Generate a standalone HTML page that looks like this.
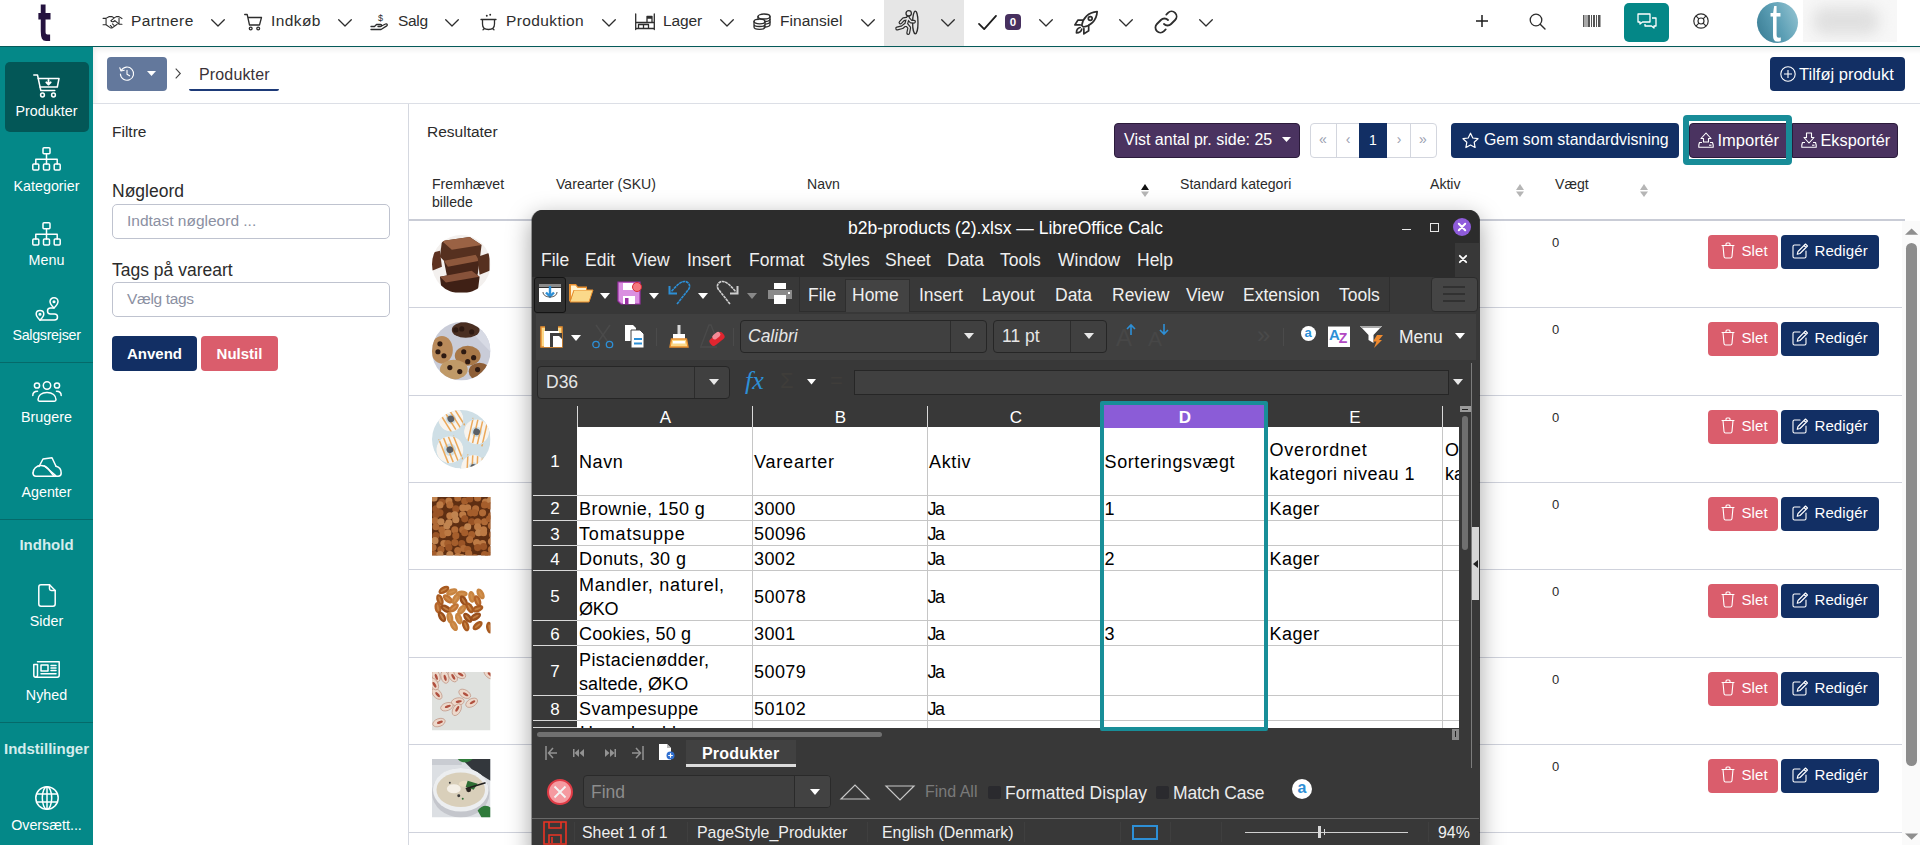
<!DOCTYPE html>
<html lang="da">
<head>
<meta charset="utf-8">
<title>Produkter</title>
<style>
*{box-sizing:border-box;margin:0;padding:0}
html,body{width:1920px;height:845px;overflow:hidden;background:#fff}
body{font-family:"Liberation Sans","DejaVu Sans",sans-serif;color:#2b2b2b;position:relative}
.a{position:absolute;white-space:nowrap}
svg{display:block;overflow:visible;position:absolute}
/* top nav */
#top{position:absolute;left:0;top:0;width:1920px;height:47px;background:#fff;border-bottom:1px solid #055a5a}
#top .t{position:absolute;top:11.4px;letter-spacing:.4px;font-size:15.5px;line-height:20px;color:#2d2d2d;white-space:nowrap}
.chev{position:absolute;top:18.8px;width:14px;height:8px}
/* sidebar */
#side{position:absolute;left:0;top:47px;width:93px;height:798px;background:#048888}
#side .lbl{position:absolute;left:0;width:93px;text-align:center;color:#fff;font-size:14.3px;line-height:18px;white-space:nowrap}
#side .sec{position:absolute;left:0;width:93px;text-align:center;color:#d4ecec;font-size:15px;font-weight:bold;line-height:18px;white-space:nowrap}
#side .hr{position:absolute;left:0;width:93px;height:1px;background:#056a6a}
.w{fill:none;stroke:#fff;stroke-width:1.5;stroke-linecap:round;stroke-linejoin:round}
.k{fill:none;stroke:#2d2d2d;stroke-width:1.3;stroke-linecap:round;stroke-linejoin:round}
/* main */
#main{position:absolute;left:93px;top:47px;width:1827px;height:798px;background:#fff}
#main .a{color:#2b2b2b}
.btn{position:absolute;border-radius:4px;color:#fff;white-space:nowrap}
.navy{background:#122f64}
.purple{background:#4a3360;border:1px solid #2b1b3b}
.red{background:#da5d6c}
.inp{position:absolute;border:1px solid #bfc3cf;border-radius:5px;background:#fff;color:#8b90a2;font-size:15.5px;line-height:32px;padding-left:14px;white-space:nowrap}
.th{position:absolute;font-size:14.1px;line-height:18px;color:#2b2b2b;white-space:nowrap}
.rowline{position:absolute;left:316px;width:1493px;height:1px;background:#cfd2dc}
.zero{position:absolute;left:1459px;font-size:13px;line-height:16px;color:#2b2b2b}
.slet{left:1615px;width:70px;height:34px}
.red span,.edit span{position:absolute;top:7px;font-size:15px;line-height:18px;letter-spacing:.1px}
.edit{left:1688px;width:98px;height:34px}
.sort{position:absolute;width:8px;height:13px}
/* libreoffice window */
#lo{position:absolute;left:532px;top:210px;width:947px;height:650px;background:#383838;border-radius:11px 11px 0 0;box-shadow:0 8px 24px 1px rgba(0,0,0,.36),1px 0 0 0 rgba(22,22,22,.8),-1px 0 0 0 rgba(22,22,22,.35);overflow:hidden;font-family:"Liberation Sans","DejaVu Sans",sans-serif}
#lo .a{color:#efefef}
#lo .m{position:absolute;top:39px;font-size:17.5px;line-height:22px;color:#efefef;white-space:nowrap}
#lo .tb{position:absolute;top:74px;font-size:17.5px;line-height:22px;color:#efefef;white-space:nowrap}
.car{position:absolute;width:10px;height:6px}
.box{position:absolute;background:#404040;border:1px solid #262626;border-radius:4px}
.ch{position:absolute;top:195px;height:22px;color:#fff;font-size:17px;line-height:25.5px;text-align:center;padding-left:2px;overflow:hidden}
.rh{position:absolute;left:1px;width:44px;color:#fff;font-size:17px;text-align:center}
.cell{position:absolute;color:#000;font-size:18px;line-height:24px;white-space:nowrap}
#lo .cell{color:#000}
.gl{position:absolute;background:#c6c6c6}
.st{position:absolute;top:613px;font-size:15.9px;line-height:20px;color:#efefef;white-space:nowrap}
</style>
</head>
<body>
<div id="top">
  <div class="a" style="left:38px;top:-3.500px;font-size:51px;line-height:54px;font-weight:bold;color:#24123f;font-family:'DejaVu Sans','Liberation Sans',sans-serif;transform:scaleX(.54);transform-origin:left top">t</div>
  <!-- Partnere -->
  <svg style="left:102.500px;top:16px" width="19" height="12.300" viewBox="0 0 20 13"><path class="k" style="stroke-width:1.150" d="M0 2.500h3l3.200-1.800h3.400l2.300 1.300 2.100-1.300h2.800l3.200 2H20M0 9.200h3.200l4.300 3.100c.9.600 1.800.600 2.600 0l4.800-3.600M12 2 8.300 4.900c.8 1.300 2.200 1.500 3.400.600l.9-.700 4.300 3.700M16.900 8.700H20M3.200 2.500v6.700M16.900 2.500v6.200M9.200 11.500 7.700 10M11.500 9.800 10 8.300"/></svg>
  <div class="t" style="left:131px">Partnere</div>
  <svg class="chev" style="left:211px" viewBox="0 0 14 8"><path class="k" d="M.7.7 7 7 13.300.7"/></svg>
  <!-- Indkøb -->
  <svg style="left:244px;top:13px" width="19" height="18" viewBox="0 0 19 18"><path class="k" d="M.7 1.500h2.500l2.300 10.500h10l2-7.500H4.200"/><circle class="k" cx="6.700" cy="15.500" r="1.400"/><circle class="k" cx="14.200" cy="15.500" r="1.400"/></svg>
  <div class="t" style="left:271px">Indkøb</div>
  <svg class="chev" style="left:338px" viewBox="0 0 14 8"><path class="k" d="M.7.7 7 7 13.300.7"/></svg>
  <!-- Salg -->
  <svg style="left:371px;top:12px" width="19" height="19" viewBox="0 0 19 19"><path class="k" d="M0 14.500h3.500l2-2h4c1.500 0 1.500 2 0 2h-2.500M9.500 14.500l5-2.500c1.500-.7 2.500 1 1.200 1.900L10 17.500H0"/><text x="7" y="9" font-size="9" font-family="Liberation Sans,sans-serif" fill="#2d2d2d">$</text></svg>
  <div class="t" style="left:398px;letter-spacing:-.3px">Salg</div>
  <svg class="chev" style="left:445px" viewBox="0 0 14 8"><path class="k" d="M.7.7 7 7 13.300.7"/></svg>
  <!-- Produktion -->
  <svg style="left:480px;top:13px" width="17" height="18" viewBox="0 0 17 18"><path class="k" d="M1 6.500h15M2.500 6.500v4.500c0 3.500 2.500 5.500 6 5.500s6-2 6-5.500V6.500M4.200 15.300 3 16.800M12.800 15.300 14 16.800"/><circle cx="6.800" cy="2.800" r=".95" fill="#2d2d2d"/><circle cx="10.200" cy="1.800" r=".95" fill="#2d2d2d"/></svg>
  <div class="t" style="left:506px">Produktion</div>
  <svg class="chev" style="left:602px" viewBox="0 0 14 8"><path class="k" d="M.7.7 7 7 13.300.7"/></svg>
  <!-- Lager -->
  <svg style="left:635px;top:14px" width="20" height="16" viewBox="0 0 20 16"><path class="k" d="M.7 0v15.500M19.300 0v15.500M.7 8.500h18.600M.7 14.500h18.600M3.500 14.500v-4h5v4M8.500 14.500v-4h5v4M12 8.500v-6h5v6M12 4h5"/></svg>
  <div class="t" style="left:663px;letter-spacing:-.1px">Lager</div>
  <svg class="chev" style="left:720px" viewBox="0 0 14 8"><path class="k" d="M.7.7 7 7 13.300.7"/></svg>
  <!-- Finansiel -->
  <svg style="left:753px;top:13px" width="19" height="17" viewBox="0 0 19 17"><ellipse class="k" cx="11" cy="3.500" rx="6" ry="2.500"/><path class="k" d="M5 3.500v3M17 3.500v8c0 1.400-2.700 2.500-6 2.500"/><ellipse class="k" cx="6.500" cy="8.500" rx="5.500" ry="2.300"/><path class="k" d="M1 8.500v5.500c0 1.300 2.500 2.300 5.500 2.300s5.500-1 5.500-2.300V8.500M1 11.200c0 1.300 2.500 2.300 5.500 2.300s5.500-1 5.500-2.300M17 6.200c0 1-1.800 2-4.500 2.300M17 8.800c0 1-1.800 2-4.500 2.300"/></svg>
  <div class="t" style="left:780px;letter-spacing:.05px">Finansiel</div>
  <svg class="chev" style="left:861px" viewBox="0 0 14 8"><path class="k" d="M.7.7 7 7 13.300.7"/></svg>
  <!-- active runner -->
  <div class="a" style="left:884px;top:0;width:80px;height:46px;background:#e6e6e6"></div>
  <svg style="left:895px;top:9px" width="26" height="27" viewBox="0 0 26 27"><ellipse cx="20.300" cy="13.500" rx="2.700" ry="11.300" fill="none" stroke="#2d2d2d" stroke-width="1.300"/><path d="M13 8.500 11.200 15M11.200 15l3 3.800-1 5.200M11.200 15 7.200 18.200l-5 1.300M13 9.500 8.500 10.200 5.500 13.500M13.200 9.500l2.800 3 3 .2" fill="none" stroke="#2d2d2d" stroke-width="3.900" stroke-linecap="round" stroke-linejoin="round"/><path d="M13 8.500 11.200 15M11.200 15l3 3.800-1 5.200M11.200 15 7.200 18.200l-5 1.300M13 9.500 8.500 10.200 5.500 13.500M13.200 9.500l2.800 3 3 .2" fill="none" stroke="#e6e6e6" stroke-width="1.500" stroke-linecap="round" stroke-linejoin="round"/><circle cx="13.700" cy="4.300" r="2.700" fill="#e6e6e6" stroke="#2d2d2d" stroke-width="1.300"/></svg>
  <svg class="chev" style="left:941px" viewBox="0 0 14 8"><path class="k" d="M.7.7 7 7 13.300.7"/></svg>
  <!-- check -->
  <svg style="left:977.300px;top:13.500px" width="21" height="17" viewBox="0 0 21 18"><path d="M1.500 10.500 7 16 19.500 2" fill="none" stroke="#1d1d1d" stroke-width="1.900" stroke-linecap="round" stroke-linejoin="round"/></svg>
  <div class="a" style="left:1005px;top:14px;width:16px;height:16px;border-radius:4px;background:#47305f;color:#fff;font-size:11.5px;font-weight:bold;line-height:16px;text-align:center">0</div>
  <svg class="chev" style="left:1039px" viewBox="0 0 14 8"><path class="k" d="M.7.7 7 7 13.300.7"/></svg>
  <!-- rocket -->
  <svg style="left:1073px;top:9.500px" width="26" height="25.500" viewBox="0 0 24 24"><g class="k" style="stroke-width:1.600"><path d="M8 14.500C9 8 14 2 22.500 1.500 22 10 16 15 9.500 16z"/><circle cx="16" cy="8" r="1.800"/><path d="M9.500 9.500H4.500L1.500 14h5M14.500 14.500v5L10 22.500v-5M6.500 16.500c-2.500.5-3.500 3-3.500 5 2 0 4.500-1 5-3.500"/></g></svg>
  <svg class="chev" style="left:1119px" viewBox="0 0 14 8"><path class="k" d="M.7.7 7 7 13.300.7"/></svg>
  <!-- link -->
  <svg style="left:1154px;top:10px" width="24" height="24" viewBox="0 0 24 24"><g class="k" style="stroke-width:1.800"><path d="M10 14a5 5 0 0 0 7.100 0l4-4A5 5 0 0 0 14 2.900l-1.700 1.700"/><path d="M14 10a5 5 0 0 0-7.100 0l-4 4A5 5 0 0 0 10 21.100l1.700-1.700"/></g></svg>
  <svg class="chev" style="left:1199px" viewBox="0 0 14 8"><path class="k" d="M.7.7 7 7 13.300.7"/></svg>
  <!-- right side -->
  <svg style="left:1476px;top:15px" width="12" height="12" viewBox="0 0 12 12"><path d="M6 0v12M0 6h12" stroke="#1d1d1d" stroke-width="1.500" fill="none"/></svg>
  <svg style="left:1529px;top:13px" width="17" height="17" viewBox="0 0 17 17"><circle cx="7" cy="7" r="5.800" fill="none" stroke="#2d2d2d" stroke-width="1.300"/><path d="M11.200 11.200 16 16" stroke="#2d2d2d" stroke-width="1.400" stroke-linecap="round"/></svg>
  <svg style="left:1583px;top:15px" width="18" height="12" viewBox="0 0 18 12"><g fill="#555"><rect x="0" width="1.500" height="12"/><rect x="2.500" width="1" height="12"/><rect x="4.500" width="2.500" height="12"/><rect x="8" width="1" height="12"/><rect x="10" width="2" height="12"/><rect x="13" width="1" height="12"/><rect x="15" width="2.500" height="12"/></g></svg>
  <div class="a" style="left:1624px;top:3px;width:45px;height:39px;border-radius:5px;background:#048787"></div>
  <svg style="left:1637px;top:13px" width="20" height="18" viewBox="0 0 20 18"><g fill="none" stroke="#fff" stroke-width="1.300" stroke-linejoin="round"><path d="M1 1h12v8H5.500L3 11V9H1z"/><path d="M15 5h4v8h-2v2l-2.500-2H8v-2"/></g></svg>
  <svg style="left:1693px;top:13px" width="16" height="16" viewBox="0 0 16 16"><g fill="none" stroke="#2d2d2d" stroke-width="1.200"><circle cx="8" cy="8" r="7.200"/><circle cx="8" cy="8" r="3"/><path d="M2.900 2.900 5.900 5.900M13.100 2.900 10.100 5.900M2.900 13.100 5.900 10.100M13.100 13.100 10.100 10.100"/></g></svg>
  <div class="a" style="left:1757px;top:2px;width:41px;height:41px;border-radius:50%;background:linear-gradient(65deg,#3a7d95 5%,#5c9fb5 50%,#93c3d1 95%);overflow:hidden"><span style="position:absolute;left:12.500px;top:-5.500px;font-size:53px;line-height:52px;color:#fff;font-family:'Liberation Sans',sans-serif;transform:scaleX(.75);transform-origin:left top">t</span></div>
  <div class="a" style="left:1803px;top:0;width:94px;height:42px;background:#f7f7f7;overflow:hidden"><div class="a" style="left:10px;top:7px;width:66px;height:28px;border-radius:12px;background:#e0e0e0;filter:blur(7px)"></div></div>
</div>
<div id="side">
  <!-- coordinates inside #side are page y minus 47 -->
  <div class="a" style="left:5px;top:15px;width:84px;height:70px;border-radius:5px;background:#035757"></div>
  <!-- Produkter icon: page x33-59,y74-97 -->
  <svg style="left:33px;top:27px" width="27" height="24" viewBox="0 0 27 24"><g class="w"><path d="M.8 1h3.700l3.300 15.500h14"/><path d="M5.200 4.500H26l-1.700 8.500H7"/><circle cx="9.500" cy="21" r="1.900"/><circle cx="20.500" cy="21" r="1.900"/><path d="M15.500 5.800v4.500M13.300 8.300l2.200 2.200 2.200-2.200" style="stroke-width:1.800"/></g></svg>
  <div class="lbl" style="top:55px">Produkter</div>
  <!-- Kategorier: icon page y147.5-170.4 -->
  <svg style="left:32px;top:100px" width="29" height="24" viewBox="0 0 29 24"><g class="w"><rect x="11" y=".8" width="7" height="6" rx="1"/><rect x=".8" y="17" width="6" height="6" rx="1"/><rect x="11.500" y="17" width="6" height="6" rx="1"/><rect x="22.200" y="17" width="6" height="6" rx="1"/><path d="M14.500 6.800V17M3.800 17v-4.700h21.400V17"/></g></svg>
  <div class="lbl" style="top:130px">Kategorier</div>
  <!-- Menu: icon page y222.5-245.4 -->
  <svg style="left:32px;top:175px" width="29" height="24" viewBox="0 0 29 24"><g class="w"><rect x="11" y=".8" width="7" height="6" rx="1"/><rect x=".8" y="17" width="6" height="6" rx="1"/><rect x="11.500" y="17" width="6" height="6" rx="1"/><rect x="22.200" y="17" width="6" height="6" rx="1"/><path d="M14.500 6.800V17M3.800 17v-4.700h21.400V17"/></g></svg>
  <div class="lbl" style="top:204px">Menu</div>
  <!-- Salgsrejser: icon page x35-58.5,y297-321 -->
  <svg style="left:35px;top:250px" width="24" height="24" viewBox="0 0 24 24"><g class="w"><path d="M19 .8c2.300 0 4 1.700 4 3.800 0 2.700-4 6.400-4 6.400s-4-3.700-4-6.400c0-2.100 1.700-3.800 4-3.800z"/><circle cx="19" cy="4.700" r=".8"/><path d="M5 13.500c2.200 0 3.800 1.600 3.800 3.600 0 2.500-3.800 6-3.800 6s-3.800-3.500-3.800-6c0-2 1.600-3.600 3.800-3.600z"/><circle cx="5" cy="17.200" r=".8"/><path d="M5 23.100h14.500a3 3 0 0 0 0-6h-4a3 3 0 0 1 0-6H19"/></g></svg>
  <div class="lbl" style="top:279px;letter-spacing:-.3px">Salgsrejser</div>
  <div class="hr" style="top:315px"></div>
  <!-- Brugere: icon page x32-61,y381-401.5 -->
  <svg style="left:32px;top:334px" width="30" height="21" viewBox="0 0 30 21"><g class="w"><circle cx="15" cy="4.500" r="3.700"/><circle cx="5" cy="4.500" r="2.600"/><circle cx="25" cy="4.500" r="2.600"/><path d="M7.500 20.200h15c1.200 0 1.500-.8 1.500-1.700 0-4-3.500-7-9-7s-9 3-9 7c0 .9.300 1.700 1.500 1.700z"/><path d="M.8 14.500c0-2.500 1.700-4.300 4.700-4.300M29.200 14.500c0-2.500-1.700-4.300-4.700-4.300"/></g></svg>
  <div class="lbl" style="top:361px">Brugere</div>
  <!-- Agenter: icon page y457-477 -->
  <svg style="left:32px;top:410px" width="30" height="20" viewBox="0 0 30 20"><g class="w"><path d="M7 9.500 11 2l9-1.200 4 8.500"/><path d="M1 16c0-4 3.500-7.500 8-7.500 3 0 5 1 7 3l6 7.700"/><path d="M12.500 9l12 10.200M24 9.300c3 .7 5.200 3.500 5.200 6.700 0 2-1.200 3.200-3 3.200H4c-1.800 0-3-1.200-3-3.200"/></g></svg>
  <div class="lbl" style="top:436px">Agenter</div>
  <div class="hr" style="top:472px"></div>
  <div class="sec" style="top:489px">Indhold</div>
  <!-- Sider: icon page x38-56,y584-606.5 -->
  <svg style="left:38px;top:537px" width="18" height="23" viewBox="0 0 18 23"><g class="w"><path d="M3 .8h8.500l5.700 5.700V20c0 1.300-.9 2.200-2.200 2.200H3C1.700 22.200.8 21.300.8 20V3C.8 1.700 1.700.8 3 .8z"/><path d="M11.500.8v4c0 1 .7 1.700 1.700 1.700h4"/></g></svg>
  <div class="lbl" style="top:565px">Sider</div>
  <!-- Nyhed: icon page x33-60,y661-677.5 -->
  <svg style="left:33px;top:614px" width="27" height="17" viewBox="0 0 27 17"><g class="w"><path d="M4.500.8h21.700v13.500c0 1.100-.8 1.900-1.900 1.900H2.700"/><path d="M4.500 3.500H.8v10.800c0 1.100.8 1.900 1.900 1.900s1.800-.8 1.800-1.900z"/><rect x="8" y="4" width="7" height="6"/><path d="M18 4.500h5M18 7h5M18 9.500h5M8 12.800h15"/></g></svg>
  <div class="lbl" style="top:639px">Nyhed</div>
  <div class="hr" style="top:675px"></div>
  <div class="sec" style="top:693px">Indstillinger</div>
  <!-- globe: page x35-58.6,y786.6-810 -->
  <svg style="left:35px;top:739px" width="24" height="24" viewBox="0 0 24 24"><g class="w"><circle cx="12" cy="12" r="11.200"/><ellipse cx="12" cy="12" rx="4.700" ry="11.200"/><path d="M12 .8v22.400M1.500 8h21M1.500 16h21"/></g></svg>
  <div class="lbl" style="top:769px">Oversætt...</div>
</div>
<div id="main">
<div class="a" style="left:0;top:0;width:1827px;height:56px;box-shadow:inset 4px 5px 6px -3px rgba(0,0,0,.09)"></div>
<div class="a" style="left:0;top:56px;width:1827px;height:1px;background:#dcdfe6"></div>
<div class="a" style="left:14px;top:10px;width:60px;height:34px;border-radius:4px;background:#63789c"></div>
<svg style="left:26px;top:18.600px" width="16" height="16" viewBox="0 0 16 16"><g fill="none" stroke="#fff" stroke-width="1.1" stroke-linecap="round" stroke-linejoin="round"><path d="M2.200 4.500A6.600 6.600 0 1 1 1.400 8"/><path d="M.8 1.800 2 5l3.200-.8"/><path d="M8 4.200V8.300l2.600 1.500"/></g></svg>
<svg style="left:54px;top:24px" width="9" height="5" viewBox="0 0 9 5"><path d="M0 0h9L4.500 5z" fill="#fff"/></svg>
<svg style="left:82px;top:21px" width="6" height="11" viewBox="0 0 6 11"><path d="M.7.700 5.300 5.500.7 10.300" fill="none" stroke="#444" stroke-width="1.100"/></svg>
<div class="a" style="left:106px;top:17.500px;font-size:16px;line-height:20px;letter-spacing:.15px;color:#3a3238">Produkter</div>
<div class="a" style="left:96px;top:42px;width:90px;height:1.600px;border-radius:0 0 2px 2px;background:#1d3a78"></div>
<div class="btn navy" style="left:1677px;top:10px;width:135px;height:34px"><svg style="left:10px;top:9px" width="16" height="16" viewBox="0 0 16 16"><g fill="none" stroke="#fff" stroke-width="1.100"><circle cx="8" cy="8" r="7.200"/><path d="M8 4v8M4 8h8"/></g></svg><span class="a" style="left:29px;top:7px;font-size:16.500px;line-height:20px;color:#fff">Tilføj produkt</span></div>
<div class="a" style="left:315px;top:57px;width:1px;height:742px;background:#d5d8e0"></div>
<div class="a" style="left:19px;top:75px;font-size:15.500px;line-height:20px">Filtre</div>
<div class="a" style="left:19px;top:132.800px;font-size:17.500px;line-height:22px">Nøgleord</div>
<div class="inp" style="left:19px;top:157px;width:278px;height:35px">Indtast nøgleord ...</div>
<div class="a" style="left:19px;top:211.700px;font-size:17.500px;line-height:22px">Tags på vareart</div>
<div class="inp" style="left:19px;top:235px;width:278px;height:35px;letter-spacing:-.35px">Vælg tags</div>
<div class="btn navy" style="left:19px;top:289px;width:85px;height:35px;font-weight:bold;font-size:15px;line-height:35px;text-align:center">Anvend</div>
<div class="btn red" style="left:108px;top:289px;width:77px;height:35px;font-weight:bold;font-size:15px;line-height:35px;text-align:center">Nulstil</div>
<div class="a" style="left:334px;top:75px;font-size:15.500px;line-height:20px">Resultater</div>
<div class="btn purple" style="left:1021px;top:76px;width:186px;height:35px"><span class="a" style="left:9px;top:6px;font-size:16px;line-height:20px;color:#fff">Vist antal pr. side: 25</span><svg style="left:167px;top:13px" width="9" height="5" viewBox="0 0 9 5"><path d="M0 0h9L4.500 5z" fill="#fff"/></svg></div>
<div class="a" style="left:1217px;top:76px;width:127px;height:35px;border:1px solid #d3d6de;border-radius:4px;background:#fff"></div>
<div class="a" style="left:1243px;top:76px;width:1px;height:35px;background:#d3d6de"></div>
<div class="a" style="left:1317px;top:76px;width:1px;height:35px;background:#d3d6de"></div>
<div class="a" style="left:1266px;top:76px;width:28px;height:35px;background:#122f64;color:#fff;font-size:14px;line-height:35px;text-align:center">1</div>
<div class="a" style="left:1222px;top:76px;width:16px;height:35px;color:#9aa0b0;font-size:14px;line-height:33px;text-align:center">«</div>
<div class="a" style="left:1247px;top:76px;width:16px;height:35px;color:#9aa0b0;font-size:14px;line-height:33px;text-align:center">‹</div>
<div class="a" style="left:1298px;top:76px;width:16px;height:35px;color:#9aa0b0;font-size:14px;line-height:33px;text-align:center">›</div>
<div class="a" style="left:1322px;top:76px;width:16px;height:35px;color:#9aa0b0;font-size:14px;line-height:33px;text-align:center">»</div>
<div class="btn navy" style="left:1358px;top:76px;width:228px;height:35px"><svg style="left:11px;top:9px" width="17" height="17" viewBox="0 0 17 17"><path d="M8.500 1.200 10.800 6l5.200.7-3.800 3.600.9 5.200-4.600-2.500-4.600 2.500.9-5.200L1 6.700 6.200 6z" fill="none" stroke="#fff" stroke-width="1.200" stroke-linejoin="round"/></svg><span class="a" style="left:33px;top:7px;font-size:15.900px;line-height:20px;color:#fff">Gem som standardvisning</span></div>
<div class="btn purple" style="left:1596px;top:76px;width:103px;height:35px;border-radius:4px 0 0 4px"><svg style="left:8px;top:7.500px" width="16" height="16" viewBox="0 0 16 16"><g fill="none" stroke="#fff" stroke-width="1.100" stroke-linejoin="round"><path d="M5.500 6.500H3L8 1l5 5.500h-2.500V10h-5z"/><path d="M4 10.500H1.500L.8 13v2.200h14.400V13l-.7-2.500H12"/><path d="M11 13.200h2.500"/></g></svg><span class="a" style="left:27.500px;top:6px;font-size:16.500px;line-height:20px;color:#fff">Importér</span></div>
<div class="btn purple" style="left:1699px;top:76px;width:106px;height:35px;border-radius:0 4px 4px 0"><svg style="left:8px;top:7.500px" width="16" height="16" viewBox="0 0 16 16"><g fill="none" stroke="#fff" stroke-width="1.100" stroke-linejoin="round"><path d="M5.500 1h5v4.500H13L8 11 3 5.500h2.500z"/><path d="M4 10.500H1.500L.8 13v2.200h14.400V13l-.7-2.500H12"/><path d="M11 13.200h2.500"/></g></svg><span class="a" style="left:27.500px;top:6px;font-size:16.300px;line-height:20px;color:#fff">Eksportér</span></div>
<div class="a" style="left:1590px;top:68px;width:109px;height:50px;border:6px solid #188c98;border-radius:4px"></div>
<div class="th" style="left:339px;top:128px">Fremhævet<br>billede</div>
<div class="th" style="left:463px;top:128px">Varearter (SKU)</div>
<div class="th" style="left:714px;top:128px">Navn</div>
<div class="th" style="left:1087px;top:128px">Standard kategori</div>
<div class="th" style="left:1337px;top:128px">Aktiv</div>
<div class="th" style="left:1462px;top:128px">Vægt</div>
<svg class="sort" style="left:1048px;top:137px" viewBox="0 0 8 13"><path d="M0 6h8L4 0z" fill="#111"/><path d="M0 7.500h8L4 13z" fill="#b5b5b5"/></svg>
<svg class="sort" style="left:1423px;top:137px" viewBox="0 0 8 13"><path d="M0 6h8L4 0z" fill="#b5b5b5"/><path d="M0 7.500h8L4 13z" fill="#b5b5b5"/></svg>
<svg class="sort" style="left:1547px;top:137px" viewBox="0 0 8 13"><path d="M0 6h8L4 0z" fill="#b5b5b5"/><path d="M0 7.500h8L4 13z" fill="#b5b5b5"/></svg>
<div class="a" style="left:316px;top:172px;width:1496px;height:2px;background:#c9ccd6"></div>
<div class="zero" style="top:188px">0</div>
<div class="btn red slet" style="top:188px"><svg style="left:13px;top:7px" width="14" height="17" viewBox="0 0 14 17"><g fill="none" stroke="#fff" stroke-width="1.100" stroke-linejoin="round" stroke-linecap="round"><path d="M1 3.500h12M2 3.500l1 11c.1 1 .7 1.500 1.500 1.500h5c.8 0 1.400-.5 1.500-1.500l1-11M5 3.500V2c0-.6.400-1 1-1h2c.6 0 1 .4 1 1v1.500"/></g></svg><span style="left:33.500px">Slet</span></div>
<div class="btn navy edit" style="top:188px"><svg style="left:11px;top:8px" width="17" height="16" viewBox="0 0 17 16"><g fill="none" stroke="#fff" stroke-width="1.100" stroke-linejoin="round" stroke-linecap="round"><path d="M8 2H2.500C1.500 2 1 2.500 1 3.500v10c0 1 .5 1.500 1.500 1.500h10c1 0 1.500-.5 1.500-1.500V8"/><path d="M13.500 1l2 2L8 10.500l-2.800.8.800-2.800zM12 2.500l2 2"/></g></svg><span style="left:33.500px">Redigér</span></div>
<div class="rowline" style="top:260px"></div>
<div class="zero" style="top:275px">0</div>
<div class="btn red slet" style="top:275px"><svg style="left:13px;top:7px" width="14" height="17" viewBox="0 0 14 17"><g fill="none" stroke="#fff" stroke-width="1.100" stroke-linejoin="round" stroke-linecap="round"><path d="M1 3.500h12M2 3.500l1 11c.1 1 .7 1.500 1.500 1.500h5c.8 0 1.400-.5 1.500-1.500l1-11M5 3.500V2c0-.6.400-1 1-1h2c.6 0 1 .4 1 1v1.500"/></g></svg><span style="left:33.500px">Slet</span></div>
<div class="btn navy edit" style="top:275px"><svg style="left:11px;top:8px" width="17" height="16" viewBox="0 0 17 16"><g fill="none" stroke="#fff" stroke-width="1.100" stroke-linejoin="round" stroke-linecap="round"><path d="M8 2H2.500C1.500 2 1 2.500 1 3.500v10c0 1 .5 1.500 1.500 1.500h10c1 0 1.500-.5 1.500-1.500V8"/><path d="M13.500 1l2 2L8 10.500l-2.800.8.800-2.800zM12 2.500l2 2"/></g></svg><span style="left:33.500px">Redigér</span></div>
<div class="rowline" style="top:348px"></div>
<div class="zero" style="top:363px">0</div>
<div class="btn red slet" style="top:363px"><svg style="left:13px;top:7px" width="14" height="17" viewBox="0 0 14 17"><g fill="none" stroke="#fff" stroke-width="1.100" stroke-linejoin="round" stroke-linecap="round"><path d="M1 3.500h12M2 3.500l1 11c.1 1 .7 1.500 1.500 1.500h5c.8 0 1.400-.5 1.500-1.500l1-11M5 3.500V2c0-.6.400-1 1-1h2c.6 0 1 .4 1 1v1.500"/></g></svg><span style="left:33.500px">Slet</span></div>
<div class="btn navy edit" style="top:363px"><svg style="left:11px;top:8px" width="17" height="16" viewBox="0 0 17 16"><g fill="none" stroke="#fff" stroke-width="1.100" stroke-linejoin="round" stroke-linecap="round"><path d="M8 2H2.500C1.500 2 1 2.500 1 3.500v10c0 1 .5 1.500 1.500 1.500h10c1 0 1.500-.5 1.500-1.500V8"/><path d="M13.500 1l2 2L8 10.500l-2.800.8.800-2.800zM12 2.500l2 2"/></g></svg><span style="left:33.500px">Redigér</span></div>
<div class="rowline" style="top:435px"></div>
<div class="zero" style="top:450px">0</div>
<div class="btn red slet" style="top:450px"><svg style="left:13px;top:7px" width="14" height="17" viewBox="0 0 14 17"><g fill="none" stroke="#fff" stroke-width="1.100" stroke-linejoin="round" stroke-linecap="round"><path d="M1 3.500h12M2 3.500l1 11c.1 1 .7 1.500 1.500 1.500h5c.8 0 1.400-.5 1.500-1.500l1-11M5 3.500V2c0-.6.400-1 1-1h2c.6 0 1 .4 1 1v1.500"/></g></svg><span style="left:33.500px">Slet</span></div>
<div class="btn navy edit" style="top:450px"><svg style="left:11px;top:8px" width="17" height="16" viewBox="0 0 17 16"><g fill="none" stroke="#fff" stroke-width="1.100" stroke-linejoin="round" stroke-linecap="round"><path d="M8 2H2.500C1.500 2 1 2.500 1 3.500v10c0 1 .5 1.500 1.500 1.500h10c1 0 1.500-.5 1.500-1.500V8"/><path d="M13.500 1l2 2L8 10.500l-2.800.8.800-2.800zM12 2.500l2 2"/></g></svg><span style="left:33.500px">Redigér</span></div>
<div class="rowline" style="top:522px"></div>
<div class="zero" style="top:537px">0</div>
<div class="btn red slet" style="top:537px"><svg style="left:13px;top:7px" width="14" height="17" viewBox="0 0 14 17"><g fill="none" stroke="#fff" stroke-width="1.100" stroke-linejoin="round" stroke-linecap="round"><path d="M1 3.500h12M2 3.500l1 11c.1 1 .7 1.500 1.500 1.500h5c.8 0 1.400-.5 1.500-1.500l1-11M5 3.500V2c0-.6.400-1 1-1h2c.6 0 1 .4 1 1v1.500"/></g></svg><span style="left:33.500px">Slet</span></div>
<div class="btn navy edit" style="top:537px"><svg style="left:11px;top:8px" width="17" height="16" viewBox="0 0 17 16"><g fill="none" stroke="#fff" stroke-width="1.100" stroke-linejoin="round" stroke-linecap="round"><path d="M8 2H2.500C1.500 2 1 2.500 1 3.500v10c0 1 .5 1.500 1.500 1.500h10c1 0 1.500-.5 1.500-1.500V8"/><path d="M13.500 1l2 2L8 10.500l-2.800.8.800-2.800zM12 2.500l2 2"/></g></svg><span style="left:33.500px">Redigér</span></div>
<div class="rowline" style="top:610px"></div>
<div class="zero" style="top:625px">0</div>
<div class="btn red slet" style="top:625px"><svg style="left:13px;top:7px" width="14" height="17" viewBox="0 0 14 17"><g fill="none" stroke="#fff" stroke-width="1.100" stroke-linejoin="round" stroke-linecap="round"><path d="M1 3.500h12M2 3.500l1 11c.1 1 .7 1.500 1.500 1.500h5c.8 0 1.400-.5 1.500-1.500l1-11M5 3.500V2c0-.6.400-1 1-1h2c.6 0 1 .4 1 1v1.500"/></g></svg><span style="left:33.500px">Slet</span></div>
<div class="btn navy edit" style="top:625px"><svg style="left:11px;top:8px" width="17" height="16" viewBox="0 0 17 16"><g fill="none" stroke="#fff" stroke-width="1.100" stroke-linejoin="round" stroke-linecap="round"><path d="M8 2H2.500C1.500 2 1 2.500 1 3.500v10c0 1 .5 1.500 1.500 1.500h10c1 0 1.500-.5 1.500-1.500V8"/><path d="M13.500 1l2 2L8 10.500l-2.800.8.800-2.800zM12 2.500l2 2"/></g></svg><span style="left:33.500px">Redigér</span></div>
<div class="rowline" style="top:697px"></div>
<div class="zero" style="top:712px">0</div>
<div class="btn red slet" style="top:712px"><svg style="left:13px;top:7px" width="14" height="17" viewBox="0 0 14 17"><g fill="none" stroke="#fff" stroke-width="1.100" stroke-linejoin="round" stroke-linecap="round"><path d="M1 3.500h12M2 3.500l1 11c.1 1 .7 1.500 1.500 1.500h5c.8 0 1.400-.5 1.500-1.500l1-11M5 3.500V2c0-.6.400-1 1-1h2c.6 0 1 .4 1 1v1.500"/></g></svg><span style="left:33.500px">Slet</span></div>
<div class="btn navy edit" style="top:712px"><svg style="left:11px;top:8px" width="17" height="16" viewBox="0 0 17 16"><g fill="none" stroke="#fff" stroke-width="1.100" stroke-linejoin="round" stroke-linecap="round"><path d="M8 2H2.500C1.500 2 1 2.500 1 3.500v10c0 1 .5 1.500 1.500 1.500h10c1 0 1.500-.5 1.500-1.500V8"/><path d="M13.500 1l2 2L8 10.500l-2.800.8.800-2.800zM12 2.500l2 2"/></g></svg><span style="left:33.500px">Redigér</span></div>
<div class="rowline" style="top:785px"></div>
<div class="a" style="left:1809px;top:174px;width:18px;height:624px;background:#fafafa"></div>
<svg style="left:1812px;top:180.800px" width="13.200" height="7.200" viewBox="0 0 15 7"><path d="M0 7 7.500 0 15 7z" fill="#8e8e8e"/></svg>
<svg style="left:1812px;top:786px" width="13.200" height="7.200" viewBox="0 0 15 7"><path d="M0 0 7.500 7 15 0z" fill="#8e8e8e"/></svg>
<div class="a" style="left:1813px;top:196px;width:11px;height:523px;border-radius:5.500px;background:#8c8c8c"></div>
<svg style="left:338.8px;top:187.8px" width="58.500" height="58.500" viewBox="0 0 59 59"><defs><clipPath id="cp0"><circle cx="29.500" cy="29.500" r="29.500"/></clipPath></defs><g clip-path="url(#cp0)"><rect width="59" height="59" fill="#f3f0ee"/><path d="M10 6 38 2l12 8-2 16-30 6L8 22z" fill="#56301f"/><path d="M10 6 38 2l12 8-30 5z" fill="#9a6244"/><path d="M12 26 44 20l4 6-2 14-30 6z" fill="#482619"/><path d="M12 26 44 20l4 6-32 6z" fill="#8e583c"/><path d="M8 42 40 36l8 6-2 16H10z" fill="#3f2015"/><path d="M8 42 40 36l8 6-34 6z" fill="#87523a"/><path d="M46 22l12-4v18l-10 4z" fill="#56301f"/><path d="M0 18l8-2 2 16-10 4z" fill="#5e3221"/></g></svg>
<svg style="left:338.8px;top:275.2px" width="58.500" height="58.500" viewBox="0 0 59 59"><defs><clipPath id="cp1"><circle cx="29.500" cy="29.500" r="29.500"/></clipPath></defs><g clip-path="url(#cp1)"><rect width="59" height="59" fill="#c9ccd8"/><path d="M30 0h29v30z" fill="#d7dae4"/><ellipse cx="34" cy="8" rx="14" ry="8" fill="#4a2f22"/><ellipse cx="10" cy="28" rx="11" ry="14" fill="#b98a5a"/><ellipse cx="36" cy="34" rx="13" ry="10" fill="#a87848"/><ellipse cx="22" cy="48" rx="14" ry="10" fill="#c09a68"/><ellipse cx="48" cy="50" rx="11" ry="9" fill="#8e5f38"/><circle cx="30" cy="7" r="2.600" fill="#2e1a12"/><circle cx="40" cy="10" r="2.600" fill="#2e1a12"/><circle cx="8" cy="22" r="2.600" fill="#2e1a12"/><circle cx="12" cy="34" r="2.600" fill="#2e1a12"/><circle cx="32" cy="30" r="2.600" fill="#2e1a12"/><circle cx="42" cy="36" r="2.600" fill="#2e1a12"/><circle cx="36" cy="40" r="2.600" fill="#2e1a12"/><circle cx="18" cy="46" r="2.600" fill="#2e1a12"/><circle cx="28" cy="50" r="2.600" fill="#2e1a12"/><circle cx="46" cy="48" r="2.600" fill="#2e1a12"/><circle cx="52" cy="54" r="2.600" fill="#2e1a12"/><circle cx="24" cy="8" r="2.600" fill="#2e1a12"/><circle cx="6" cy="30" r="2.600" fill="#2e1a12"/></g></svg>
<svg style="left:338.8px;top:362.5px" width="58.500" height="58.500" viewBox="0 0 59 59"><defs><clipPath id="cp2"><circle cx="29.500" cy="29.500" r="29.500"/></clipPath></defs><g clip-path="url(#cp2)"><rect width="59" height="59" fill="#cfdfe6"/><g transform="rotate(-25 19 9)"><circle cx="19" cy="9" r="9" fill="none" stroke="#f8f4ee" stroke-width="7.500"/><path d="M11 -3l3 24" stroke="#e9a04a" stroke-width="1.500" fill="none" opacity=".9"/><path d="M16 -3l3 24" stroke="#e9a04a" stroke-width="1.500" fill="none" opacity=".9"/><path d="M21 -3l3 24" stroke="#e9a04a" stroke-width="1.500" fill="none" opacity=".9"/><path d="M26 -3l3 24" stroke="#e9a04a" stroke-width="1.500" fill="none" opacity=".9"/><circle cx="19" cy="9" r="3.400" fill="#5a5f66"/><circle cx="19" cy="9" r="13.2" fill="none" stroke="#cfdfe6" stroke-width="1.200"/></g><g transform="rotate(20 45 22)"><circle cx="45" cy="22" r="9" fill="none" stroke="#f8f4ee" stroke-width="7.500"/><path d="M37 10l3 24" stroke="#e9a04a" stroke-width="1.500" fill="none" opacity=".9"/><path d="M42 10l3 24" stroke="#e9a04a" stroke-width="1.500" fill="none" opacity=".9"/><path d="M47 10l3 24" stroke="#e9a04a" stroke-width="1.500" fill="none" opacity=".9"/><path d="M52 10l3 24" stroke="#e9a04a" stroke-width="1.500" fill="none" opacity=".9"/><circle cx="45" cy="22" r="3.400" fill="#5a5f66"/><circle cx="45" cy="22" r="13.2" fill="none" stroke="#cfdfe6" stroke-width="1.200"/></g><g transform="rotate(-15 18 40)"><circle cx="18" cy="40" r="10" fill="none" stroke="#f8f4ee" stroke-width="7.500"/><path d="M10 27l3 26" stroke="#e9a04a" stroke-width="1.500" fill="none" opacity=".9"/><path d="M15 27l3 26" stroke="#e9a04a" stroke-width="1.500" fill="none" opacity=".9"/><path d="M20 27l3 26" stroke="#e9a04a" stroke-width="1.500" fill="none" opacity=".9"/><path d="M25 27l3 26" stroke="#e9a04a" stroke-width="1.500" fill="none" opacity=".9"/><circle cx="18" cy="40" r="3.400" fill="#5a5f66"/><circle cx="18" cy="40" r="14.2" fill="none" stroke="#cfdfe6" stroke-width="1.200"/></g><g transform="rotate(10 42 58)"><circle cx="42" cy="58" r="9" fill="none" stroke="#f8f4ee" stroke-width="7.500"/><path d="M34 46l3 24" stroke="#e9a04a" stroke-width="1.500" fill="none" opacity=".9"/><path d="M39 46l3 24" stroke="#e9a04a" stroke-width="1.500" fill="none" opacity=".9"/><path d="M44 46l3 24" stroke="#e9a04a" stroke-width="1.500" fill="none" opacity=".9"/><path d="M49 46l3 24" stroke="#e9a04a" stroke-width="1.500" fill="none" opacity=".9"/><circle cx="42" cy="58" r="3.400" fill="#5a5f66"/><circle cx="42" cy="58" r="13.2" fill="none" stroke="#cfdfe6" stroke-width="1.200"/></g></g></svg>
<svg style="left:338.8px;top:449.9px" width="58.500" height="58.500" viewBox="0 0 59 59"><defs><clipPath id="cp3"><rect width="59" height="59"/></clipPath></defs><g clip-path="url(#cp3)"><rect width="59" height="59" fill="#5e2e12"/><circle cx="2" cy="1" r="3.600" fill="#c08450"/><circle cx="10" cy="5" r="3.600" fill="#9a5426"/><circle cx="17" cy="4" r="3.600" fill="#bd7a44"/><circle cx="26" cy="1" r="3.600" fill="#b06a36"/><circle cx="33" cy="4" r="3.600" fill="#a55e2c"/><circle cx="38" cy="2" r="3.600" fill="#9a5426"/><circle cx="46" cy="1" r="3.600" fill="#b06a36"/><circle cx="54" cy="5" r="3.600" fill="#bd7a44"/><circle cx="59" cy="3" r="3.600" fill="#c08450"/><circle cx="4" cy="12" r="3.600" fill="#9a5426"/><circle cx="8" cy="8" r="3.600" fill="#bd7a44"/><circle cx="18" cy="8" r="3.600" fill="#b06a36"/><circle cx="24" cy="12" r="3.600" fill="#9a5426"/><circle cx="31" cy="11" r="3.600" fill="#bd7a44"/><circle cx="36" cy="11" r="3.600" fill="#bd7a44"/><circle cx="44" cy="12" r="3.600" fill="#b06a36"/><circle cx="53" cy="8" r="3.600" fill="#a55e2c"/><circle cx="59" cy="9" r="3.600" fill="#a55e2c"/><circle cx="4" cy="18" r="3.600" fill="#9a5426"/><circle cx="8" cy="16" r="3.600" fill="#9a5426"/><circle cx="18" cy="19" r="3.600" fill="#bd7a44"/><circle cx="23" cy="18" r="3.600" fill="#c08450"/><circle cx="31" cy="18" r="3.600" fill="#bd7a44"/><circle cx="39" cy="16" r="3.600" fill="#a55e2c"/><circle cx="43" cy="16" r="3.600" fill="#a55e2c"/><circle cx="51" cy="16" r="3.600" fill="#b06a36"/><circle cx="60" cy="19" r="3.600" fill="#a55e2c"/><circle cx="3" cy="24" r="3.600" fill="#b06a36"/><circle cx="9" cy="25" r="3.600" fill="#c08450"/><circle cx="17" cy="26" r="3.600" fill="#c08450"/><circle cx="24" cy="23" r="3.600" fill="#c08450"/><circle cx="33" cy="22" r="3.600" fill="#9a5426"/><circle cx="40" cy="25" r="3.600" fill="#9a5426"/><circle cx="46" cy="25" r="3.600" fill="#b06a36"/><circle cx="53" cy="25" r="3.600" fill="#b06a36"/><circle cx="58" cy="22" r="3.600" fill="#a55e2c"/><circle cx="4" cy="30" r="3.600" fill="#b06a36"/><circle cx="10" cy="33" r="3.600" fill="#b06a36"/><circle cx="15" cy="29" r="3.600" fill="#c08450"/><circle cx="23" cy="33" r="3.600" fill="#b06a36"/><circle cx="31" cy="33" r="3.600" fill="#b06a36"/><circle cx="36" cy="30" r="3.600" fill="#c08450"/><circle cx="46" cy="30" r="3.600" fill="#bd7a44"/><circle cx="52" cy="33" r="3.600" fill="#bd7a44"/><circle cx="60" cy="29" r="3.600" fill="#b06a36"/><circle cx="4" cy="39" r="3.600" fill="#9a5426"/><circle cx="11" cy="38" r="3.600" fill="#b06a36"/><circle cx="16" cy="36" r="3.600" fill="#bd7a44"/><circle cx="24" cy="39" r="3.600" fill="#a55e2c"/><circle cx="33" cy="36" r="3.600" fill="#a55e2c"/><circle cx="40" cy="38" r="3.600" fill="#a55e2c"/><circle cx="47" cy="36" r="3.600" fill="#c08450"/><circle cx="52" cy="36" r="3.600" fill="#bd7a44"/><circle cx="61" cy="38" r="3.600" fill="#a55e2c"/><circle cx="3" cy="44" r="3.600" fill="#c08450"/><circle cx="12" cy="47" r="3.600" fill="#bd7a44"/><circle cx="16" cy="47" r="3.600" fill="#a55e2c"/><circle cx="23" cy="46" r="3.600" fill="#a55e2c"/><circle cx="30" cy="47" r="3.600" fill="#9a5426"/><circle cx="38" cy="43" r="3.600" fill="#b06a36"/><circle cx="45" cy="46" r="3.600" fill="#bd7a44"/><circle cx="51" cy="47" r="3.600" fill="#bd7a44"/><circle cx="60" cy="45" r="3.600" fill="#bd7a44"/><circle cx="1" cy="51" r="3.600" fill="#b06a36"/><circle cx="9" cy="53" r="3.600" fill="#a55e2c"/><circle cx="17" cy="51" r="3.600" fill="#9a5426"/><circle cx="26" cy="54" r="3.600" fill="#b06a36"/><circle cx="32" cy="52" r="3.600" fill="#b06a36"/><circle cx="36" cy="53" r="3.600" fill="#a55e2c"/><circle cx="46" cy="51" r="3.600" fill="#9a5426"/><circle cx="52" cy="50" r="3.600" fill="#9a5426"/><circle cx="60" cy="53" r="3.600" fill="#b06a36"/><circle cx="2" cy="58" r="3.600" fill="#a55e2c"/><circle cx="8" cy="58" r="3.600" fill="#c08450"/><circle cx="18" cy="58" r="3.600" fill="#c08450"/><circle cx="26" cy="60" r="3.600" fill="#bd7a44"/><circle cx="30" cy="61" r="3.600" fill="#c08450"/><circle cx="37" cy="57" r="3.600" fill="#b06a36"/><circle cx="43" cy="61" r="3.600" fill="#a55e2c"/><circle cx="53" cy="58" r="3.600" fill="#a55e2c"/><circle cx="57" cy="59" r="3.600" fill="#a55e2c"/></g></svg>
<svg style="left:338.8px;top:537.3px" width="58.500" height="58.500" viewBox="0 0 59 59"><defs><clipPath id="cp4"><rect width="59" height="59"/></clipPath></defs><g clip-path="url(#cp4)"><rect width="59" height="59" fill="#fff"/><ellipse cx="12" cy="6" rx="6" ry="3.400" fill="#a85a20" transform="rotate(-30 12 6)"/><ellipse cx="12" cy="6" rx="3.500" ry="1" fill="#d99a58" opacity=".6" transform="rotate(-30 12 6)"/><ellipse cx="20" cy="8" rx="6" ry="3.400" fill="#c88440" transform="rotate(-20 20 8)"/><ellipse cx="20" cy="8" rx="3.500" ry="1" fill="#d99a58" opacity=".6" transform="rotate(-20 20 8)"/><ellipse cx="30" cy="10" rx="6" ry="3.400" fill="#c88440" transform="rotate(0 30 10)"/><ellipse cx="30" cy="10" rx="3.500" ry="1" fill="#d99a58" opacity=".6" transform="rotate(0 30 10)"/><ellipse cx="8" cy="16" rx="6" ry="3.400" fill="#a85a20" transform="rotate(70 8 16)"/><ellipse cx="8" cy="16" rx="3.500" ry="1" fill="#d99a58" opacity=".6" transform="rotate(70 8 16)"/><ellipse cx="16" cy="15" rx="6" ry="3.400" fill="#c07434" transform="rotate(40 16 15)"/><ellipse cx="16" cy="15" rx="3.500" ry="1" fill="#d99a58" opacity=".6" transform="rotate(40 16 15)"/><ellipse cx="24" cy="15" rx="6" ry="3.400" fill="#c88440" transform="rotate(-60 24 15)"/><ellipse cx="24" cy="15" rx="3.500" ry="1" fill="#d99a58" opacity=".6" transform="rotate(-60 24 15)"/><ellipse cx="32" cy="17" rx="6" ry="3.400" fill="#9a4f1c" transform="rotate(60 32 17)"/><ellipse cx="32" cy="17" rx="3.500" ry="1" fill="#d99a58" opacity=".6" transform="rotate(60 32 17)"/><ellipse cx="40" cy="13" rx="6" ry="3.400" fill="#c88440" transform="rotate(80 40 13)"/><ellipse cx="40" cy="13" rx="3.500" ry="1" fill="#d99a58" opacity=".6" transform="rotate(80 40 13)"/><ellipse cx="46" cy="17" rx="6" ry="3.400" fill="#b5652a" transform="rotate(70 46 17)"/><ellipse cx="46" cy="17" rx="3.500" ry="1" fill="#d99a58" opacity=".6" transform="rotate(70 46 17)"/><ellipse cx="49" cy="10" rx="6" ry="3.400" fill="#c88440" transform="rotate(60 49 10)"/><ellipse cx="49" cy="10" rx="3.500" ry="1" fill="#d99a58" opacity=".6" transform="rotate(60 49 10)"/><ellipse cx="6" cy="24" rx="6" ry="3.400" fill="#b5652a" transform="rotate(80 6 24)"/><ellipse cx="6" cy="24" rx="3.500" ry="1" fill="#d99a58" opacity=".6" transform="rotate(80 6 24)"/><ellipse cx="14" cy="25" rx="6" ry="3.400" fill="#9a4f1c" transform="rotate(30 14 25)"/><ellipse cx="14" cy="25" rx="3.500" ry="1" fill="#d99a58" opacity=".6" transform="rotate(30 14 25)"/><ellipse cx="22" cy="24" rx="6" ry="3.400" fill="#c07434" transform="rotate(-40 22 24)"/><ellipse cx="22" cy="24" rx="3.500" ry="1" fill="#d99a58" opacity=".6" transform="rotate(-40 22 24)"/><ellipse cx="30" cy="26" rx="6" ry="3.400" fill="#c88440" transform="rotate(-50 30 26)"/><ellipse cx="30" cy="26" rx="3.500" ry="1" fill="#d99a58" opacity=".6" transform="rotate(-50 30 26)"/><ellipse cx="38" cy="24" rx="6" ry="3.400" fill="#a85a20" transform="rotate(60 38 24)"/><ellipse cx="38" cy="24" rx="3.500" ry="1" fill="#d99a58" opacity=".6" transform="rotate(60 38 24)"/><ellipse cx="46" cy="25" rx="6" ry="3.400" fill="#a85a20" transform="rotate(-20 46 25)"/><ellipse cx="46" cy="25" rx="3.500" ry="1" fill="#d99a58" opacity=".6" transform="rotate(-20 46 25)"/><ellipse cx="10" cy="33" rx="6" ry="3.400" fill="#9a4f1c" transform="rotate(60 10 33)"/><ellipse cx="10" cy="33" rx="3.500" ry="1" fill="#d99a58" opacity=".6" transform="rotate(60 10 33)"/><ellipse cx="18" cy="34" rx="6" ry="3.400" fill="#c88440" transform="rotate(80 18 34)"/><ellipse cx="18" cy="34" rx="3.500" ry="1" fill="#d99a58" opacity=".6" transform="rotate(80 18 34)"/><ellipse cx="27" cy="35" rx="6" ry="3.400" fill="#c88440" transform="rotate(70 27 35)"/><ellipse cx="27" cy="35" rx="3.500" ry="1" fill="#d99a58" opacity=".6" transform="rotate(70 27 35)"/><ellipse cx="36" cy="34" rx="6" ry="3.400" fill="#9a4f1c" transform="rotate(50 36 34)"/><ellipse cx="36" cy="34" rx="3.500" ry="1" fill="#d99a58" opacity=".6" transform="rotate(50 36 34)"/><ellipse cx="44" cy="33" rx="6" ry="3.400" fill="#9a4f1c" transform="rotate(-30 44 33)"/><ellipse cx="44" cy="33" rx="3.500" ry="1" fill="#d99a58" opacity=".6" transform="rotate(-30 44 33)"/><ellipse cx="34" cy="42" rx="6" ry="3.400" fill="#a85a20" transform="rotate(70 34 42)"/><ellipse cx="34" cy="42" rx="3.500" ry="1" fill="#d99a58" opacity=".6" transform="rotate(70 34 42)"/><ellipse cx="46" cy="42" rx="6" ry="3.400" fill="#a85a20" transform="rotate(-40 46 42)"/><ellipse cx="46" cy="42" rx="3.500" ry="1" fill="#d99a58" opacity=".6" transform="rotate(-40 46 42)"/><ellipse cx="58" cy="44" rx="6" ry="3.400" fill="#a85a20" transform="rotate(80 58 44)"/><ellipse cx="58" cy="44" rx="3.500" ry="1" fill="#d99a58" opacity=".6" transform="rotate(80 58 44)"/><ellipse cx="22" cy="42" rx="6" ry="3.400" fill="#c88440" transform="rotate(60 22 42)"/><ellipse cx="22" cy="42" rx="3.500" ry="1" fill="#d99a58" opacity=".6" transform="rotate(60 22 42)"/></g></svg>
<svg style="left:338.8px;top:624.6px" width="58.500" height="58.500" viewBox="0 0 59 59"><defs><clipPath id="cp5"><rect width="59" height="59"/></clipPath></defs><g clip-path="url(#cp5)"><rect width="59" height="59" fill="#dfe1de"/><ellipse cx="4" cy="4" rx="6.500" ry="3.900" fill="#ecd8cb" stroke="#b98a78" stroke-width=".6" transform="rotate(70 4 4)"/><ellipse cx="5" cy="4" rx="3.200" ry="1.300" fill="#b0503f" transform="rotate(70 4 4)"/><ellipse cx="13" cy="5" rx="6.500" ry="3.900" fill="#ecd8cb" stroke="#b98a78" stroke-width=".6" transform="rotate(75 13 5)"/><ellipse cx="14" cy="5" rx="3.200" ry="1.300" fill="#b0503f" transform="rotate(75 13 5)"/><ellipse cx="21" cy="4" rx="6.500" ry="3.900" fill="#ecd8cb" stroke="#b98a78" stroke-width=".6" transform="rotate(60 21 4)"/><ellipse cx="22" cy="4" rx="3.200" ry="1.300" fill="#b0503f" transform="rotate(60 21 4)"/><ellipse cx="28" cy="2" rx="6.500" ry="3.900" fill="#ecd8cb" stroke="#b98a78" stroke-width=".6" transform="rotate(30 28 2)"/><ellipse cx="29" cy="2" rx="3.200" ry="1.300" fill="#b0503f" transform="rotate(30 28 2)"/><ellipse cx="5" cy="22" rx="6.500" ry="3.900" fill="#ecd8cb" stroke="#b98a78" stroke-width=".6" transform="rotate(50 5 22)"/><ellipse cx="6" cy="22" rx="3.200" ry="1.300" fill="#b0503f" transform="rotate(50 5 22)"/><ellipse cx="33" cy="22" rx="6.500" ry="3.900" fill="#ecd8cb" stroke="#b98a78" stroke-width=".6" transform="rotate(30 33 22)"/><ellipse cx="34" cy="22" rx="3.200" ry="1.300" fill="#b0503f" transform="rotate(30 33 22)"/><ellipse cx="26" cy="30" rx="6.500" ry="3.900" fill="#ecd8cb" stroke="#b98a78" stroke-width=".6" transform="rotate(-10 26 30)"/><ellipse cx="27" cy="30" rx="3.200" ry="1.300" fill="#b0503f" transform="rotate(-10 26 30)"/><ellipse cx="40" cy="31" rx="6.500" ry="3.900" fill="#ecd8cb" stroke="#b98a78" stroke-width=".6" transform="rotate(-30 40 31)"/><ellipse cx="41" cy="31" rx="3.200" ry="1.300" fill="#b0503f" transform="rotate(-30 40 31)"/><ellipse cx="15" cy="35" rx="6.500" ry="3.900" fill="#ecd8cb" stroke="#b98a78" stroke-width=".6" transform="rotate(-20 15 35)"/><ellipse cx="16" cy="35" rx="3.200" ry="1.300" fill="#b0503f" transform="rotate(-20 15 35)"/><ellipse cx="25" cy="38" rx="6.500" ry="3.900" fill="#ecd8cb" stroke="#b98a78" stroke-width=".6" transform="rotate(-60 25 38)"/><ellipse cx="26" cy="38" rx="3.200" ry="1.300" fill="#b0503f" transform="rotate(-60 25 38)"/><ellipse cx="7" cy="51" rx="6.500" ry="3.900" fill="#ecd8cb" stroke="#b98a78" stroke-width=".6" transform="rotate(-20 7 51)"/><ellipse cx="8" cy="51" rx="3.200" ry="1.300" fill="#b0503f" transform="rotate(-20 7 51)"/><ellipse cx="58" cy="2" rx="6.500" ry="3.900" fill="#ecd8cb" stroke="#b98a78" stroke-width=".6" transform="rotate(40 58 2)"/><ellipse cx="59" cy="2" rx="3.200" ry="1.300" fill="#b0503f" transform="rotate(40 58 2)"/><ellipse cx="2" cy="12" rx="6.500" ry="3.900" fill="#ecd8cb" stroke="#b98a78" stroke-width=".6" transform="rotate(60 2 12)"/><ellipse cx="3" cy="12" rx="3.200" ry="1.300" fill="#b0503f" transform="rotate(60 2 12)"/></g></svg>
<svg style="left:338.8px;top:712px" width="58.500" height="58.500" viewBox="0 0 59 59"><defs><clipPath id="cp6"><rect width="59" height="59"/></clipPath></defs><g clip-path="url(#cp6)"><rect width="59" height="59" fill="#dcdfe3"/><path d="M30 0h29v22L40 10z" fill="#33373c"/><path d="M0 0h30v6H0z" fill="#c9ccd2"/><ellipse cx="29" cy="34" rx="29" ry="25" fill="#c4c6cc"/><ellipse cx="29" cy="31" rx="28" ry="22" fill="#eceef0"/><ellipse cx="29" cy="31" rx="24.500" ry="17.500" fill="#d9cfba"/><ellipse cx="22" cy="30" rx="7" ry="4.500" fill="#f4efe6"/><ellipse cx="33" cy="25" rx="6" ry="3" fill="#e9dcc4"/><path d="M36 22l10 3-4 6-8-3z" fill="#2f6e35"/><path d="M34 30l20-6" stroke="#1f1f1f" stroke-width="1.600"/><circle cx="37" cy="31" r="2.500" fill="#2a2420"/><circle cx="27" cy="37" r="1.500" fill="#3a3a3a"/><circle cx="18" cy="24" r="1" fill="#3a3a3a"/><circle cx="31" cy="40" r="1" fill="#2f6e35"/><path d="M46 52c4-6 10-6 13-3v10H50z" fill="#2f7a3a"/><path d="M26 0c3 4 10 5 15 0z" fill="#2f7a3a"/></g></svg>
</div>
<div id="lo">
<div class="a" style="left:0;top:0;width:947px;height:67px;background:#2c2c2c"></div>
<div class="a" style="left:0;top:6.500px;width:947px;text-align:center;font-size:17.5px;line-height:22px;color:#fff">b2b-products (2).xlsx — LibreOffice Calc</div>
<div class="a" style="left:870px;top:19px;width:8.500px;height:1.400px;background:#e8e8e8"></div>
<div class="a" style="left:898px;top:13px;width:8.500px;height:8.500px;border:1.400px solid #e8e8e8"></div>
<div class="a" style="left:921px;top:8px;width:18px;height:18px;border-radius:50%;background:#8f5cdb"></div>
<svg style="left:926px;top:13px" width="8" height="8" viewBox="0 0 8 8"><path d="M.8.800 7.200 7.200M7.200.8.800 7.200" stroke="#fff" stroke-width="2" stroke-linecap="round"/></svg>
<div class="m" style="left:9px">File</div>
<div class="m" style="left:53px">Edit</div>
<div class="m" style="left:100px">View</div>
<div class="m" style="left:155px">Insert</div>
<div class="m" style="left:217px">Format</div>
<div class="m" style="left:290px">Styles</div>
<div class="m" style="left:353px">Sheet</div>
<div class="m" style="left:415px">Data</div>
<div class="m" style="left:468px">Tools</div>
<div class="m" style="left:526px">Window</div>
<div class="m" style="left:605px">Help</div>
<div class="a" style="left:923px;top:33px;width:24px;height:34px;background:#383838"></div>
<svg style="left:927px;top:45px" width="8" height="8" viewBox="0 0 8 8"><path d="M.8.800 7.200 7.200M7.200.8.800 7.200" stroke="#fff" stroke-width="1.800" stroke-linecap="round"/></svg>
<div class="a" style="left:1.5px;top:66.5px;width:32px;height:36px;background:#2f2f2f;border:1px solid #151515;border-radius:3px"></div>
<svg style="left:7px;top:73px" width="22" height="20" viewBox="0 0 22 20"><rect x="0" y="1" width="22" height="3" fill="#8a8a8a"/><rect x="0" y="5" width="22" height="14" fill="#fff"/><path d="M11 3v10M7 9.500l4 4 4-4" fill="none" stroke="#2d8fd6" stroke-width="2.400"/><path d="M4 9c0 3 3 5 7 5s7-2 7-5" fill="none" stroke="#555" stroke-width="1"/></svg>
<svg style="left:37px;top:73px" width="24" height="20" viewBox="0 0 24 20"><path d="M0 1h7l2 2.500h9V7H5L1 18H0z" fill="#e98f2e"/><path d="M5 7h19l-4 12H1z" fill="#fbd98a" stroke="#e98f2e" stroke-width="1"/><path d="M2 2.500h4.500l2 2.500H17v2H4.500L2 14z" fill="#fff2cf"/></svg>
<svg style="left:86px;top:72px" width="24" height="24" viewBox="0 0 24 24"><path d="M0 0h22v22H3l-3-3z" fill="#da8fe0" stroke="#9a2fa3" stroke-width="1.200"/><rect x="5" y="1" width="10" height="7" fill="#fff"/><rect x="5" y="14" width="12" height="8" fill="#fff"/><rect x="7" y="16" width="3.500" height="6" fill="#9a2fa3"/><circle cx="19" cy="5" r="4.500" fill="#f4787f" stroke="#d92b36" stroke-width="1"/></svg>
<svg style="left:136px;top:70px" width="24" height="26" viewBox="0 0 24 26"><path d="M9 24 20.500 9.500C23.500 5.500 20 1 16 1.500 12 2 8 6 3 12" fill="none" stroke="#2d8fd6" stroke-width="1.600" stroke-dasharray="3 .6"/><path d="M1.500 6v7.500H9" fill="none" stroke="#2d8fd6" stroke-width="2"/></svg>
<svg style="left:183px;top:70px" width="24" height="26" viewBox="0 0 24 26"><path d="M15 24 3.500 9.500C.5 5.500 4 1 8 1.500c4 .5 8 4.500 13 10.500" fill="none" stroke="#cfcfcf" stroke-width="1.600" stroke-dasharray="3 .6"/><path d="M22.500 6v7.500H15" fill="none" stroke="#cfcfcf" stroke-width="2"/></svg>
<svg style="left:236px;top:73px" width="24" height="21" viewBox="0 0 24 21"><rect x="6" y="0" width="12" height="6" fill="#fff"/><path d="M0 7h24v9H0z" fill="#8a8a8a"/><rect x="6" y="12" width="12" height="9" fill="#fff"/><rect x="20" y="9" width="2" height="2" fill="#fff"/></svg>
<svg class="car" style="left:68px;top:82.5px" viewBox="0 0 10 6"><path d="M0 0h10L5 6z" fill="#fff"/></svg>
<svg class="car" style="left:117px;top:82.5px" viewBox="0 0 10 6"><path d="M0 0h10L5 6z" fill="#fff"/></svg>
<svg class="car" style="left:166px;top:82.5px" viewBox="0 0 10 6"><path d="M0 0h10L5 6z" fill="#fff"/></svg>
<svg class="car" style="left:215px;top:82.5px" viewBox="0 0 10 6"><path d="M0 0h10L5 6z" fill="#888"/></svg>
<div class="a" style="left:267px;top:67px;width:591px;height:35px;background:#383838;border:1px solid #2e2e2e;border-top:none"></div>
<div class="a" style="left:312.5px;top:68.5px;width:65px;height:33px;background:#434343;border:1px solid #2e2e2e;border-bottom:none"></div>
<div class="tb" style="left:276px">File</div>
<div class="tb" style="left:320px">Home</div>
<div class="tb" style="left:387px">Insert</div>
<div class="tb" style="left:450px">Layout</div>
<div class="tb" style="left:523px">Data</div>
<div class="tb" style="left:580px">Review</div>
<div class="tb" style="left:654px">View</div>
<div class="tb" style="left:711px">Extension</div>
<div class="tb" style="left:807px">Tools</div>
<div class="a" style="left:898.5px;top:67px;width:47px;height:35px;background:#454545;border:1px solid #2c2c2c;border-radius:4px"></div>
<div class="a" style="left:911px;top:75.5px;width:22px;height:2.500px;background:#313131"></div>
<div class="a" style="left:911px;top:82.5px;width:22px;height:2.500px;background:#313131"></div>
<div class="a" style="left:911px;top:89.5px;width:22px;height:2.500px;background:#313131"></div>
<div class="a" style="left:4px;top:103.5px;width:940px;height:46px;background:#404040"></div>
<svg style="left:9px;top:115px" width="22" height="23" viewBox="0 0 22 23"><path d="M0 2h21v20H0z" fill="#fbd98a" stroke="#e98f2e" stroke-width="1.500"/><rect x="4" y="1" width="13" height="5" fill="#3f3f3f"/><rect x="3" y="6" width="15" height="16" fill="#fff"/><path d="M9 8h12v14H9z" fill="#3f3f3f"/><path d="M12 11h6l3 3v8h-9z" fill="#fff"/></svg>
<svg class="car" style="left:39px;top:125px" viewBox="0 0 10 6"><path d="M0 0h10L5 6z" fill="#fff"/></svg>
<svg style="left:60px;top:114px" width="22" height="24" viewBox="0 0 22 24"><path d="M4 1l12 17M18 1 6 18" stroke="#4a4a4a" stroke-width="1.500"/><circle cx="4" cy="20.500" r="3.200" fill="none" stroke="#2d8fd6" stroke-width="1.300"/><circle cx="17.500" cy="20.500" r="3.200" fill="none" stroke="#2d8fd6" stroke-width="1.300"/></svg>
<svg style="left:93px;top:115px" width="20" height="23" viewBox="0 0 20 23"><path d="M0 0h8l3 3v13H0z" fill="#fff"/><path d="M6 5h9l4 4v14H6z" fill="#fff" stroke="#404040" stroke-width="1"/><path d="M9 14h8M9 18.500h8" stroke="#2d8fd6" stroke-width="1.800"/></svg>
<div class="a" style="left:124px;top:118px;width:1px;height:18px;background:#4b4b4b"></div>
<svg style="left:137px;top:115px" width="20" height="23" viewBox="0 0 20 23"><rect x="8.500" y="0" width="3" height="9" fill="#d8d8d8"/><rect x="4" y="9" width="12" height="5" fill="#fff"/><path d="M2.500 14h15l1.500 8H1z" fill="#fbd98a" stroke="#e98f2e" stroke-width="1.400"/><rect x="4" y="16" width="12" height="2.500" fill="#fff"/></svg>
<svg style="left:168px;top:114px" width="26" height="25" viewBox="0 0 26 25"><path d="M1 22 9 1h2l6 15M0 23h17" fill="none" stroke="#4a4a4a" stroke-width="1.400"/><rect x="9" y="11" width="16" height="8" rx="3" transform="rotate(-38 17 15)" fill="#e0252f"/><rect x="14" y="9.500" width="9" height="5" rx="2.500" transform="rotate(-38 17 15)" fill="#f48a96"/></svg>
<div class="a" style="left:201px;top:118px;width:1px;height:18px;background:#4b4b4b"></div>
<div class="box" style="left:207.5px;top:110px;width:247px;height:33px"></div>
<div class="a" style="left:417.5px;top:111px;width:1px;height:31px;background:#2c2c2c"></div>
<div class="a" style="left:216px;top:115px;font-size:17.500px;line-height:22px;font-style:italic;color:#e6e6e6">Calibri</div>
<svg class="car" style="left:432px;top:123px" viewBox="0 0 10 6"><path d="M0 0h10L5 6z" fill="#e8e8e8"/></svg>
<div class="box" style="left:460.5px;top:110px;width:114px;height:33px"></div>
<div class="a" style="left:537.5px;top:111px;width:1px;height:31px;background:#2c2c2c"></div>
<div class="a" style="left:470px;top:115px;font-size:17.500px;line-height:22px;color:#e6e6e6">11 pt</div>
<svg class="car" style="left:552px;top:123px" viewBox="0 0 10 6"><path d="M0 0h10L5 6z" fill="#e8e8e8"/></svg>
<div class="a" style="left:584px;top:116px;font-size:24px;line-height:24px;color:#474747">A</div>
<svg style="left:594px;top:114px" width="10" height="11" viewBox="0 0 10 11"><path d="M5 11V1.500M1 5l4-4 4 4" fill="none" stroke="#2d8fd6" stroke-width="1.600"/></svg>
<div class="a" style="left:616px;top:118px;font-size:21px;line-height:22px;color:#474747">A</div>
<svg style="left:627px;top:114px" width="10" height="11" viewBox="0 0 10 11"><path d="M5 0v9.500M1 6l4 4 4-4" fill="none" stroke="#2d8fd6" stroke-width="1.600"/></svg>
<div class="a" style="left:725px;top:112px;font-size:24px;line-height:26px;color:#4a4a4a">»</div>
<div class="a" style="left:750.5px;top:118px;width:1px;height:18px;background:#4b4b4b"></div>
<div class="a" style="left:768.5px;top:116px;width:15px;height:15px;border-radius:50%;background:#fff;color:#2d8fd6;font-size:13px;font-weight:bold;line-height:13px;text-align:center">a</div>
<div class="a" style="left:796px;top:116px;width:22px;height:21px;background:#fff;border-top:1px solid #999"></div>
<div class="a" style="left:797px;top:116px;font-size:15px;line-height:18px;color:#2d8fd6;font-weight:bold;letter-spacing:-1px">A<span style="color:#b148c2;font-size:14px;position:relative;top:3px">Z</span></div>
<svg style="left:828px;top:116px" width="24" height="23" viewBox="0 0 24 23"><path d="M0 0h22l-8.500 9v8l-5-3V9z" fill="#fff"/><path d="M0 0h22l-2 2H2z" fill="#aaa"/><path d="M17 9h6l-4 5h3l-8 8 2.500-6.500H13z" fill="#f08a2e"/></svg>
<div class="a" style="left:867px;top:115.5px;font-size:17.500px;line-height:22px;color:#efefef">Menu</div>
<svg class="car" style="left:923px;top:123px" viewBox="0 0 10 6"><path d="M0 0h10L5 6z" fill="#fff"/></svg>
<div class="box" style="left:5px;top:155.5px;width:193px;height:33px"></div>
<div class="a" style="left:161.5px;top:156.5px;width:1px;height:31px;background:#2c2c2c"></div>
<div class="a" style="left:14px;top:161px;font-size:17.500px;line-height:22px;color:#e6e6e6">D36</div>
<svg class="car" style="left:177px;top:169px" viewBox="0 0 10 6"><path d="M0 0h10L5 6z" fill="#e8e8e8"/></svg>
<div class="a" style="left:213px;top:156px;font-size:26px;line-height:30px;font-style:italic;font-weight:normal;color:#2d8fd6;font-family:'Liberation Serif','DejaVu Serif',serif">fx</div>
<div class="a" style="left:248px;top:159px;font-size:22px;line-height:24px;color:#3f3d3a">Σ</div>
<svg class="car" style="left:275px;top:169px;width:9px;height:5.500px" viewBox="0 0 10 6"><path d="M0 0h10L5 6z" fill="#fff"/></svg>
<div class="a" style="left:298px;top:159px;font-size:22px;line-height:24px;color:#3f3d3a">=</div>
<div class="box" style="left:322px;top:159.500px;width:595px;height:25.500px;border-radius:0"></div>
<svg class="car" style="left:921px;top:169px" viewBox="0 0 10 6"><path d="M0 0h10L5 6z" fill="#e8e8e8"/></svg>
<div class="a" style="left:939px;top:153px;width:1px;height:405px;background:#7c7c7c"></div>
<div class="a" style="left:45px;top:217px;width:882px;height:300.5px;background:#fff"></div>
<div class="ch" style="left:45px;width:175px">A</div>
<div class="ch" style="left:220px;width:175px">B</div>
<div class="ch" style="left:396px;width:174px">C</div>
<div class="ch" style="left:572px;width:160px;background:#8b5cd7;font-weight:bold;top:195px;height:22.500px">D</div>
<div class="ch" style="left:734px;width:176px">E</div>
<div class="a" style="left:45px;top:196px;width:1px;height:21px;background:#d8d8d8"></div>
<div class="a" style="left:220px;top:196px;width:1px;height:21px;background:#d8d8d8"></div>
<div class="a" style="left:395px;top:196px;width:1px;height:21px;background:#d8d8d8"></div>
<div class="a" style="left:910px;top:196px;width:1px;height:21px;background:#d8d8d8"></div>
<div class="rh" style="top:217px;height:68px;line-height:70px">1</div>
<div class="a" style="left:1px;top:284.5px;width:44px;height:1px;background:#d8d8d8"></div>
<div class="rh" style="top:285px;height:25.5px;line-height:27.5px">2</div>
<div class="a" style="left:1px;top:310.0px;width:44px;height:1px;background:#d8d8d8"></div>
<div class="rh" style="top:310.5px;height:25.0px;line-height:27.0px">3</div>
<div class="a" style="left:1px;top:335.0px;width:44px;height:1px;background:#d8d8d8"></div>
<div class="rh" style="top:335.5px;height:25.0px;line-height:27.0px">4</div>
<div class="a" style="left:1px;top:360.0px;width:44px;height:1px;background:#d8d8d8"></div>
<div class="rh" style="top:360.5px;height:50.0px;line-height:52.0px">5</div>
<div class="a" style="left:1px;top:410.0px;width:44px;height:1px;background:#d8d8d8"></div>
<div class="rh" style="top:410.5px;height:25.0px;line-height:27.0px">6</div>
<div class="a" style="left:1px;top:435.0px;width:44px;height:1px;background:#d8d8d8"></div>
<div class="rh" style="top:435.5px;height:50.0px;line-height:52.0px">7</div>
<div class="a" style="left:1px;top:485.0px;width:44px;height:1px;background:#d8d8d8"></div>
<div class="rh" style="top:485.5px;height:25.0px;line-height:27.0px">8</div>
<div class="a" style="left:1px;top:510.0px;width:44px;height:1px;background:#d8d8d8"></div>
<div class="a" style="left:1px;top:517.0px;width:44px;height:1px;background:#d8d8d8"></div>
<div class="gl" style="left:220px;top:217px;width:1px;height:300.5px"></div>
<div class="gl" style="left:395px;top:217px;width:1px;height:300.5px"></div>
<div class="gl" style="left:569px;top:217px;width:1px;height:300.5px"></div>
<div class="gl" style="left:734px;top:217px;width:1px;height:300.5px"></div>
<div class="gl" style="left:910px;top:217px;width:1px;height:300.5px"></div>
<div class="gl" style="left:45px;top:284.5px;width:882px;height:1px"></div>
<div class="gl" style="left:45px;top:310.0px;width:882px;height:1px"></div>
<div class="gl" style="left:45px;top:335.0px;width:882px;height:1px"></div>
<div class="gl" style="left:45px;top:360.0px;width:882px;height:1px"></div>
<div class="gl" style="left:45px;top:410.0px;width:882px;height:1px"></div>
<div class="gl" style="left:45px;top:435.0px;width:882px;height:1px"></div>
<div class="gl" style="left:45px;top:485.0px;width:882px;height:1px"></div>
<div class="gl" style="left:45px;top:510.0px;width:882px;height:1px"></div>
<div class="cell" style="left:47px;top:240px;letter-spacing:0.6px">Navn</div>
<div class="cell" style="left:222px;top:240px;letter-spacing:0.8px">Varearter</div>
<div class="cell" style="left:397px;top:240px;letter-spacing:0.65px">Aktiv</div>
<div class="cell" style="left:572.500px;top:240px;letter-spacing:0.62px">Sorteringsvægt</div>
<div class="cell" style="left:737.500px;top:228px;letter-spacing:0.8px">Overordnet</div>
<div class="cell" style="left:737.500px;top:252px;letter-spacing:0.5px">kategori niveau 1</div>
<div class="cell" style="left:47px;top:286.8px;letter-spacing:0.44px">Brownie, 150 g</div>
<div class="cell" style="left:222px;top:286.8px;letter-spacing:0.4px">3000</div>
<div class="cell" style="left:395.500px;top:286.8px;letter-spacing:-1.5px">Ja</div>
<div class="cell" style="left:572.500px;top:286.8px;letter-spacing:0px">1</div>
<div class="cell" style="left:737.500px;top:286.8px;letter-spacing:0.44px">Kager</div>
<div class="cell" style="left:47px;top:312px;letter-spacing:0.85px">Tomatsuppe</div>
<div class="cell" style="left:222px;top:312px;letter-spacing:0.44px">50096</div>
<div class="cell" style="left:395.500px;top:312px;letter-spacing:-1.5px">Ja</div>
<div class="cell" style="left:47px;top:337px;letter-spacing:0.45px">Donuts, 30 g</div>
<div class="cell" style="left:222px;top:337px;letter-spacing:0.4px">3002</div>
<div class="cell" style="left:395.500px;top:337px;letter-spacing:-1.5px">Ja</div>
<div class="cell" style="left:572.500px;top:337px;letter-spacing:0px">2</div>
<div class="cell" style="left:737.500px;top:337px;letter-spacing:0.44px">Kager</div>
<div class="cell" style="left:47px;top:362.5px;letter-spacing:0.69px">Mandler, naturel,</div>
<div class="cell" style="left:47px;top:386.5px;letter-spacing:-0.2px">ØKO</div>
<div class="cell" style="left:222px;top:374.5px;letter-spacing:0.44px">50078</div>
<div class="cell" style="left:395.500px;top:374.5px;letter-spacing:-1.5px">Ja</div>
<div class="cell" style="left:47px;top:412px;letter-spacing:0.16px">Cookies, 50 g</div>
<div class="cell" style="left:222px;top:412px;letter-spacing:0.4px">3001</div>
<div class="cell" style="left:395.500px;top:412px;letter-spacing:-1.5px">Ja</div>
<div class="cell" style="left:572.500px;top:412px;letter-spacing:0px">3</div>
<div class="cell" style="left:737.500px;top:412px;letter-spacing:0.44px">Kager</div>
<div class="cell" style="left:47px;top:437.5px;letter-spacing:0.43px">Pistacienødder,</div>
<div class="cell" style="left:47px;top:461.5px;letter-spacing:0.1px">saltede, ØKO</div>
<div class="cell" style="left:222px;top:449.5px;letter-spacing:0.44px">50079</div>
<div class="cell" style="left:395.500px;top:449.5px;letter-spacing:-1.5px">Ja</div>
<div class="cell" style="left:47px;top:487px;letter-spacing:0.43px">Svampesuppe</div>
<div class="cell" style="left:222px;top:487px;letter-spacing:0.44px">50102</div>
<div class="cell" style="left:395.500px;top:487px;letter-spacing:-1.5px">Ja</div>
<div class="cell" style="left:913px;top:228px;width:14px;overflow:hidden">Ov<br>ka</div>
<div class="a" style="left:48px;top:512px;width:120px;height:5.500px;overflow:hidden"><div class="cell" style="left:0;top:-1px">Hasselnødder</div></div>
<div class="a" style="left:927px;top:195px;width:12px;height:335px;background:#383838"></div>
<div class="a" style="left:927.5px;top:196px;width:11px;height:6px;background:#9a9a9a"></div>
<div class="a" style="left:930px;top:198.5px;width:6px;height:1.500px;background:#222"></div>
<div class="a" style="left:930px;top:206px;width:6px;height:134px;border-radius:3px;background:#6f6f6f"></div>
<div class="a" style="left:940px;top:317px;width:7px;height:73px;background:#d6d6d6"></div>
<svg style="left:940.5px;top:350px" width="5" height="8" viewBox="0 0 5 8"><path d="M5 0v8L0 4z" fill="#222"/></svg>
<div class="a" style="left:5px;top:521.5px;width:345px;height:5px;border-radius:2.500px;background:#707070"></div>
<div class="a" style="left:920px;top:518.5px;width:7px;height:11px;background:#8a8a8a"></div>
<div class="a" style="left:923px;top:521px;width:1px;height:6px;background:#222"></div>
<svg style="left:13px;top:536px" width="100" height="14" viewBox="0 0 100 14"><g fill="none" stroke="#939393" stroke-width="1.500"><path d="M1 0v14M12 7H4M8 2 3.500 7 8 12"/><path d="M98 0v14M87 7h8M91 2l4.500 5L91 12"/></g><g fill="#939393"><path d="M28 3v8h1.500V3zM34 3l-4.500 4 4.500 4zM39 3l-4.500 4 4.500 4z"/><path d="M71 3v8h-1.500V3zM65 3l4.500 4-4.500 4zM60 3l4.500 4-4.500 4z"/></g></svg>
<svg style="left:126px;top:534px" width="17" height="17" viewBox="0 0 17 17"><path d="M1 0h8l4 4v12H1z" fill="#fff"/><path d="M9 0v4h4z" fill="#bbb"/><circle cx="12.500" cy="11.500" r="4" fill="#2f6fd0"/><path d="M12.500 9.200v4.600M10.200 11.500h4.600" stroke="#fff" stroke-width="1.200"/></svg>
<div class="a" style="left:154px;top:530px;width:110px;height:25px;background:#414141"></div><div class="a" style="left:170px;top:534px;font-size:16px;line-height:20px;font-weight:bold;color:#fff;letter-spacing:.2px">Produkter</div>
<div class="a" style="left:154px;top:554px;width:110px;height:2.600px;background:#dcdcdc"></div>
<div class="a" style="left:15px;top:569px;width:26px;height:26px;border-radius:50%;background:#f59aa0;border:2px solid #e03c46"></div>
<svg style="left:21px;top:575px" width="14" height="14" viewBox="0 0 14 14"><path d="M1.500 1.500l11 11M12.500 1.500l-11 11" stroke="#f3f3f3" stroke-width="1.900"/></svg>
<div class="box" style="left:51px;top:565px;width:248px;height:33px;background:#3f3f3f;border-color:#2a2a2a"></div>
<div class="a" style="left:262px;top:566px;width:36px;height:31px;background:#424242;border-left:1px solid #2a2a2a;border-radius:0 3px 3px 0"></div>
<div class="a" style="left:59px;top:571px;font-size:17.500px;line-height:22px;color:#8d8d8d">Find</div>
<svg class="car" style="left:278px;top:579px" viewBox="0 0 10 6"><path d="M0 0h10L5 6z" fill="#fff"/></svg>
<svg style="left:308px;top:574px" width="30" height="16" viewBox="0 0 30 16"><path d="M1 15 15 1l14 14z" fill="none" stroke="#c8c8c8" stroke-width="1.200"/></svg>
<svg style="left:353px;top:575px" width="30" height="16" viewBox="0 0 30 16"><path d="M1 1l14 14L29 1z" fill="none" stroke="#c8c8c8" stroke-width="1.200"/></svg>
<div class="a" style="left:393px;top:571px;font-size:16px;line-height:22px;color:#7a7a7a">Find All</div>
<div class="a" style="left:456px;top:576px;width:13px;height:13px;border-radius:2px;background:#2a2a2e"></div>
<div class="a" style="left:473px;top:572px;font-size:17.500px;line-height:22px;color:#ececec">Formatted Display</div>
<div class="a" style="left:624px;top:576px;width:13px;height:13px;border-radius:2px;background:#2a2a2e"></div>
<div class="a" style="left:641px;top:572px;font-size:17.500px;line-height:22px;color:#ececec;letter-spacing:-.2px">Match Case</div>
<div class="a" style="left:760px;top:569px;width:20px;height:20px;border-radius:50%;background:#fff;color:#2d8fd6;font-size:16px;font-weight:bold;line-height:18px;text-align:center">a</div>
<div class="a" style="left:0;top:608px;width:947px;height:1px;background:#686868"></div>
<svg style="left:11px;top:611px" width="24" height="22" viewBox="0 0 24 22"><path d="M1 1h22v22H1z" fill="none" stroke="#ea3323" stroke-width="1.600"/><path d="M6 1v6h12V1M6 22v-8h12v8M9 16v6" fill="none" stroke="#ea3323" stroke-width="1.600"/></svg>
<div class="st" style="left:50px">Sheet 1 of 1</div>
<div class="st" style="left:165px">PageStyle_Produkter</div>
<div class="st" style="left:350px">English (Denmark)</div>
<div class="st" style="left:906px">94%</div>
<div class="a" style="left:42px;top:612px;width:1px;height:20px;background:#3f3f3f"></div>
<div class="a" style="left:155px;top:612px;width:1px;height:20px;background:#3f3f3f"></div>
<div class="a" style="left:335px;top:612px;width:1px;height:20px;background:#3f3f3f"></div>
<div class="a" style="left:492px;top:612px;width:1px;height:20px;background:#3f3f3f"></div>
<div class="a" style="left:588px;top:612px;width:1px;height:20px;background:#3f3f3f"></div>
<div class="a" style="left:638px;top:612px;width:1px;height:20px;background:#3f3f3f"></div>
<div class="a" style="left:689px;top:612px;width:1px;height:20px;background:#3f3f3f"></div>
<div class="a" style="left:896px;top:612px;width:1px;height:20px;background:#3f3f3f"></div>
<div class="a" style="left:600px;top:615px;width:26px;height:15px;border:2px solid #2d8fd6"></div>
<div class="a" style="left:713px;top:621.5px;width:163px;height:1px;background:#d0d0d0"></div>
<div class="a" style="left:785.5px;top:616px;width:3px;height:12px;background:#d8d8d8"></div>
<div class="a" style="left:791.5px;top:619px;width:1px;height:6px;background:#d8d8d8"></div>
<div class="a" style="left:568px;top:190.5px;width:168px;height:330.500px;border:4px solid #188e98;border-radius:2px"></div>
</div>
</body>
</html>
